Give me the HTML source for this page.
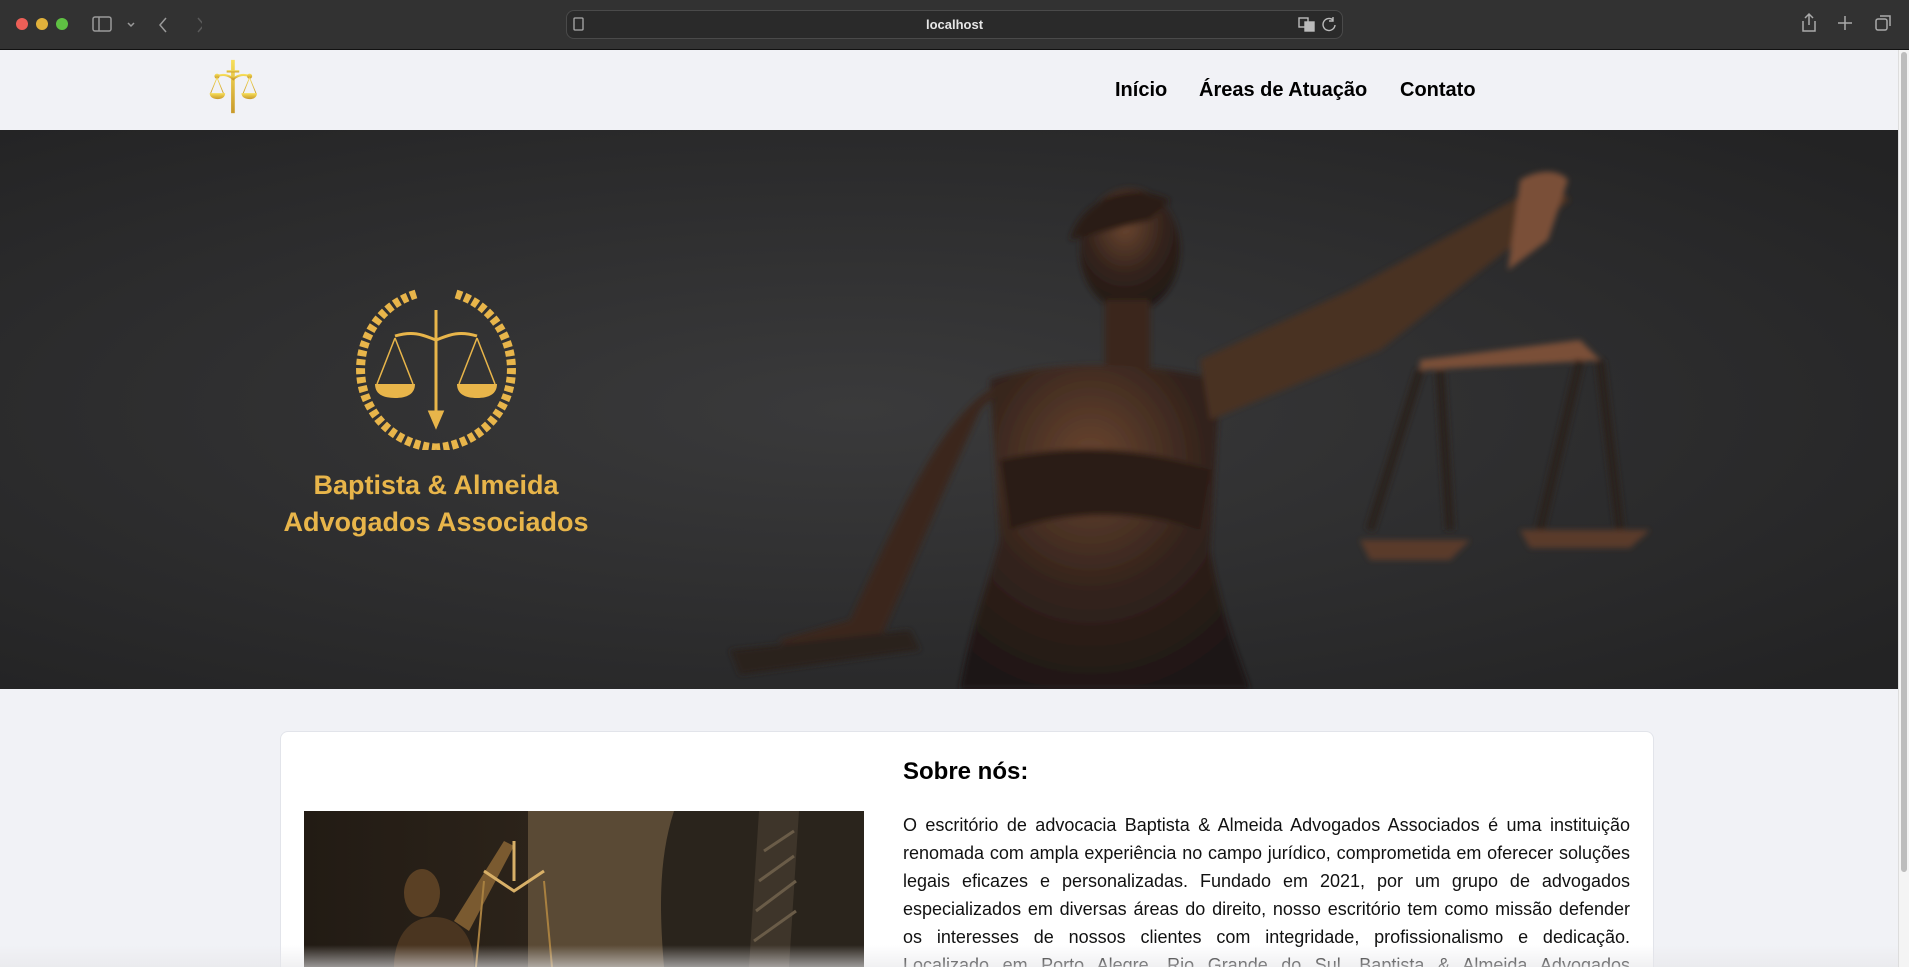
<!DOCTYPE html>
<html><head><meta charset="utf-8">
<style>
*{margin:0;padding:0;box-sizing:border-box}
html,body{width:1909px;height:967px;overflow:hidden;background:#f1f2f6;font-family:"Liberation Sans",sans-serif}
#wrap{position:relative;width:1909px;height:967px;overflow:hidden}
.chrome{position:absolute;left:0;top:0;width:1909px;height:50px;background:#323232;border-bottom:1px solid #111}
.dot{position:absolute;top:18px;width:12px;height:12px;border-radius:50%}
.url{position:absolute;left:566px;top:10px;width:777px;height:29px;border-radius:8px;background:#2a2a2a;border:1px solid #4a4a4a;color:#e6e6e6;font-size:13px;text-align:center;line-height:27px;font-weight:bold}
.nav{position:absolute;top:50px;left:0;width:1898px;height:80px;background:#f1f2f6}
.nav a{position:absolute;top:29px;font-size:20px;font-weight:bold;color:#000;text-decoration:none}
.hero{position:absolute;top:130px;left:0;width:1898px;height:559px;background:#2b2b2c;overflow:hidden}
.scroll{position:absolute;right:0;top:50px;width:11px;height:917px;background:#f4f4f4;border-left:1px solid #ddd}
.scroll div{position:absolute;left:2px;top:2px;width:6px;height:820px;border-radius:3px;background:#bdbdbd}
.card{position:absolute;left:280px;top:731px;width:1374px;height:236px;background:#fff;border:1px solid #e2e4ea;border-bottom:none;border-radius:8px 8px 0 0}
h2{position:absolute;left:903px;top:758px;font-size:24px;font-weight:bold;color:#000}
p{position:absolute;left:903px;top:811px;width:727px;height:156px;overflow:hidden;font-size:18px;line-height:28px;text-align:justify;color:#111}
.brand{position:absolute;left:236px;width:400px;text-align:center;color:#e8b54a;font-weight:bold;font-size:27px;line-height:37px;white-space:nowrap;font-family:"Liberation Sans",sans-serif}
.fade{position:absolute;left:0;top:945px;width:1898px;height:22px;background:linear-gradient(rgba(235,235,237,0),rgba(230,230,233,0.6))}
</style></head><body><div id="wrap">
<div class="chrome">
<div class="dot" style="left:16px;background:#ec5f57"></div>
<div class="dot" style="left:36px;background:#e0b13b"></div>
<div class="dot" style="left:56px;background:#5fc143"></div>
<svg style="position:absolute;left:92px;top:15px" width="110" height="20" fill="none" stroke="#9a9a9a" stroke-width="1.5"><rect x="1" y="2" width="18" height="14" rx="2"/><line x1="7" y1="2" x2="7" y2="16"/><path d="M36 8l3 3 3-3"/><path d="M74 3l-6 7 6 7"/><path d="M106 3l6 7-6 7" stroke="#5a5a5a"/></svg>
<div class="url">localhost</div>
<svg style="position:absolute;left:573px;top:17px" width="12" height="15" fill="none" stroke="#aaa" stroke-width="1.3"><rect x="1" y="1" width="9" height="12" rx="1"/></svg>
<svg style="position:absolute;left:1298px;top:16px" width="40" height="17" fill="none" stroke="#bbb" stroke-width="1.4"><rect x="1" y="2" width="9" height="9"/><rect x="7" y="6" width="9" height="9" fill="#bbb"/><path d="M35 4a6 6 0 1 0 2 5M35 1v4h-4"/></svg>
<svg style="position:absolute;left:1800px;top:12px" width="100" height="22" fill="none" stroke="#aaa" stroke-width="1.5"><path d="M3 9v10h12V9M9 2v11M5 6l4-4 4 4"/><path d="M45 4v14M38 11h14"/><rect x="76" y="7" width="11" height="11" rx="2"/><path d="M80 4h10v10"/></svg>
</div>
<div class="nav">
<svg style="position:absolute;left:200px;top:6px" width="74" height="64" viewBox="190 56 100 84">
<defs><linearGradient id="g" x1="0" y1="0" x2="0" y2="1"><stop offset="0" stop-color="#f7df5a"/><stop offset="1" stop-color="#c99a2a"/></linearGradient></defs>
<g fill="url(#g)" stroke="url(#g)">
<rect x="232" y="60" width="5" height="72" stroke="none"/><rect x="226" y="74" width="17" height="3" stroke="none"/>
<path d="M213 82c10-4 18 0 22 4 4-4 12-8 22-4" fill="none" stroke-width="3"/>
<circle cx="213" cy="82" r="3"/><circle cx="257" cy="82" r="3"/>
<path d="M213 84l-9 22M213 84l9 22M257 84l-9 22M257 84l9 22" fill="none" stroke-width="1.2"/>
<path d="M203 105h21c0 6-5 8-10 8s-11-2-11-8zM246 105h21c0 6-5 8-10 8s-11-2-11-8z" stroke="none"/>
</g></svg>
<a style="left:1115px">Início</a>
<a style="left:1199px">Áreas de Atuação</a>
<a style="left:1400px">Contato</a>
</div>
<div class="hero">
<svg width="1898" height="559" viewBox="0 0 1898 559">
<defs>
<radialGradient id="bg" cx="0.45" cy="0.5" r="0.7"><stop offset="0" stop-color="#3a3a3b"/><stop offset="1" stop-color="#232324"/></radialGradient>
<radialGradient id="br" cx="0.45" cy="0.3" r="0.8"><stop offset="0" stop-color="#6a4530"/><stop offset="0.5" stop-color="#33231c"/><stop offset="1" stop-color="#1a1412"/></radialGradient>
<filter id="bl"><feGaussianBlur stdDeviation="3"/></filter>
</defs>
<rect width="1898" height="559" fill="url(#bg)"/>
<g filter="url(#bl)">
<ellipse cx="1130" cy="120" rx="50" ry="62" fill="url(#br)"/>
<path d="M1070 110c10-40 60-60 100-40l-20 20z" fill="#2a1d18"/>
<rect x="1105" y="170" width="45" height="70" fill="#3a281f"/>
<path d="M990 250c60-20 150-20 230 0l-10 170c10 60 30 110 40 139H960c10-60 30-110 40-149z" fill="url(#br)"/>
<path d="M1000 330c80-20 150-10 210 10l-10 60c-60-20-130-20-190 0z" fill="#2a1d18"/>
<path d="M1200 230l150-70 200-110 20 20-190 150-170 70z" fill="#4a3024"/>
<path d="M1520 50c20-12 40-10 48 0l-20 60-40 30z" fill="#7a5038"/>
<path d="M1420 230l160-20 20 20-180 10z" fill="#7a5038"/>
<path d="M1420 240l-50 160M1440 240l10 160M1580 230l-40 170M1600 230l20 170" stroke="#2a201c" stroke-width="9"/>
<path d="M1360 410h110l-20 20h-80zM1520 400h130l-20 18h-100z" fill="#5a3a2a"/>
<path d="M1010 250c-60 20-100 110-160 240l-70 20 10 20 90-20 60-140 40-90z" fill="#3a281f"/>
<path d="M730 520l180-20 10 20-180 25z" fill="#2a201c"/>
</g>
</svg>
<svg style="position:absolute;left:350px;top:158px" width="172" height="162" viewBox="0 0 172 162" fill="none" stroke="#e8b54a">
<path d="M66 6C20 20 0 70 16 110c14 34 44 48 70 50" stroke-width="9" stroke-dasharray="6 3"/>
<path d="M106 6c46 14 66 64 50 104-14 34-44 48-70 50" stroke-width="9" stroke-dasharray="6 3"/>
<path d="M86 22v110M80 124l6 14 6-14z" stroke-width="3" fill="#e8b54a"/>
<path d="M45 48c20-6 30 0 41 4 11-4 21-10 41-4" stroke-width="3"/>
<path d="M45 50l-18 46M45 50l18 46M127 50l-18 46M127 50l18 46" stroke-width="1.5"/>
<path d="M25 96h40c0 10-8 14-20 14s-20-4-20-14zM107 96h40c0 10-8 14-20 14s-20-4-20-14z" fill="#e8b54a" stroke="none"/>
</svg>
<div class="brand" style="top:337px">Baptista &amp; Almeida<br>Advogados Associados</div>
</div>
<div class="card"></div>
<svg style="position:absolute;left:304px;top:811px" width="560" height="156" viewBox="0 0 560 156">
<defs><linearGradient id="c1" x1="0" x2="1"><stop offset="0" stop-color="#221b14"/><stop offset="1" stop-color="#3a2f22"/></linearGradient></defs>
<rect width="560" height="156" fill="url(#c1)"/>
<rect x="224" width="336" height="156" fill="#5a4a35"/>
<path d="M370 0h190v156H360c-5-60-5-110 10-156z" fill="#2a241c"/>
<path d="M455 0h40l-10 156h-40z" fill="#3e352a"/>
<path d="M460 40l30-20M455 70l35-25M452 100l40-30M450 130l42-30" stroke="#6a5c48" stroke-width="3"/>
<ellipse cx="118" cy="82" rx="18" ry="24" fill="#5a4024"/>
<path d="M90 156c0-30 15-50 40-50s40 20 40 50z" fill="#4a3520"/>
<path d="M150 110l50-80 10 5-45 85z" fill="#7a5a30"/>
<path d="M180 60l30 20 30-20M210 30v40" stroke="#d8b068" stroke-width="3" fill="none"/>
<path d="M180 70l-8 86M240 70l8 86" stroke="#a88040" stroke-width="2"/>
</svg>
<h2>Sobre nós:</h2>
<p>O escritório de advocacia Baptista &amp; Almeida Advogados Associados é uma instituição renomada com ampla experiência no campo jurídico, comprometida em oferecer soluções legais eficazes e personalizadas. Fundado em 2021, por um grupo de advogados especializados em diversas áreas do direito, nosso escritório tem como missão defender os interesses de nossos clientes com integridade, profissionalismo e dedicação. Localizado em Porto Alegre, Rio Grande do Sul, Baptista &amp; Almeida Advogados Associados atende clientes em todo o país.</p>
<div class="fade"></div>
<div class="scroll"><div></div></div>
</div></body></html>
